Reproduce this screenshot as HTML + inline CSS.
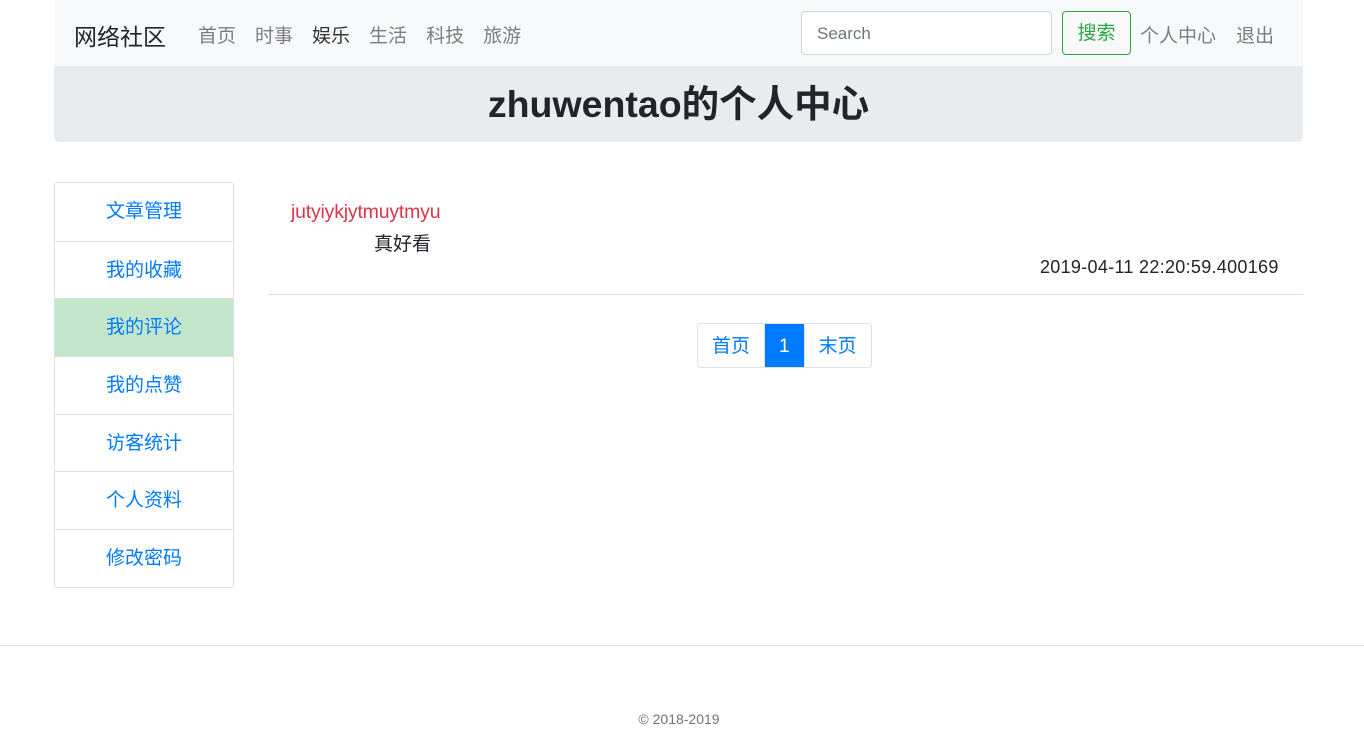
<!DOCTYPE html>
<html><head><meta charset="utf-8"><style>
*{box-sizing:border-box;margin:0;padding:0}
body{width:1364px;height:747px;font-family:"Liberation Sans","Noto Sans CJK SC",sans-serif;font-size:18px;color:#212529;background:#fff;position:relative;overflow:hidden}
.nav{position:absolute;left:54px;top:0;width:1249px;height:66px;background:#f8f9fa}
.brand{position:absolute;left:20px;top:18px;font-size:23px;color:#212529}
.links{position:absolute;left:144px;top:21px;font-size:19px;color:rgba(0,0,0,.5)}
.links span{margin-right:19px}
.search{position:absolute;left:747px;top:11px;width:251px;height:44px;border:1px solid #ced4da;border-radius:4px;background:#fff;padding:12px 15px;font-size:17px;color:#6c757d}
.btn{position:absolute;left:1008px;top:11px;width:69px;height:44px;border:1px solid #28a745;border-radius:4px;color:#28a745;text-align:center;line-height:44px;font-size:19px}
.r{position:absolute;top:21px;color:rgba(0,0,0,.5);font-size:19px}
.jumbo{position:absolute;left:54px;top:66px;width:1249px;height:76px;background:#e9ecef;border-radius:0 0 5px 5px;text-align:center;font-size:37.5px;line-height:76px;font-weight:bold}
.side{position:absolute;left:54px;top:182px;width:180px;border:1px solid #dfdfdf;border-radius:4px;overflow:hidden}
.side div{height:57.7px;line-height:58px;text-align:center;color:#007bff;border-top:1px solid #dfdfdf;font-size:19px}
.side div:first-child{border-top:0}
.side .a{background:#c3e6cb}
.u{position:absolute;left:291px;top:201px;color:#dc3545;font-size:19.5px;letter-spacing:-.2px}
.c{position:absolute;left:374px;top:229px;font-size:19px}
.d{position:absolute;left:1040px;top:257px;font-size:18px;letter-spacing:.3px}
.hr{position:absolute;left:268px;top:294px;width:1035px;border-top:1px solid #dcdcdc}
.pg{position:absolute;left:697px;top:323px;height:45px;display:flex;border:1px solid #dee2e6;border-radius:4px;overflow:hidden}
.pg span{line-height:45px;padding:0 14px;color:#007bff;font-size:19px}
.pg .on{background:#007bff;color:#fff;padding:0 14px;border-left:1px solid #dee2e6;border-right:1px solid #dee2e6}
.fhr{position:absolute;left:0;top:645px;width:1364px;border-top:1px solid #dcdcdc}
.foot{position:absolute;left:0;top:711px;width:1364px;text-align:center;font-size:14px;color:#6c757d;padding-right:6px}
</style></head><body>
<div class="nav">
<div class="brand">网络社区</div>
<div class="links"><span>首页</span><span>时事</span><span style="color:rgba(0,0,0,.8)">娱乐</span><span>生活</span><span>科技</span><span>旅游</span></div>
<div class="search">Search</div>
<div class="btn">搜索</div>
<div class="r" style="left:1086px">个人中心</div>
<div class="r" style="left:1182px">退出</div>
</div>
<div class="jumbo">zhuwentao的个人中心</div>
<div class="side"><div>文章管理</div><div>我的收藏</div><div class="a">我的评论</div><div>我的点赞</div><div>访客统计</div><div>个人资料</div><div>修改密码</div></div>
<div class="u">jutyiykjytmuytmyu</div>
<div class="c">真好看</div>
<div class="d">2019-04-11 22:20:59.400169</div>
<div class="hr"></div>
<div class="pg"><span>首页</span><span class="on">1</span><span>末页</span></div>
<div class="fhr"></div>
<div class="foot">© 2018-2019</div>
</body></html>
